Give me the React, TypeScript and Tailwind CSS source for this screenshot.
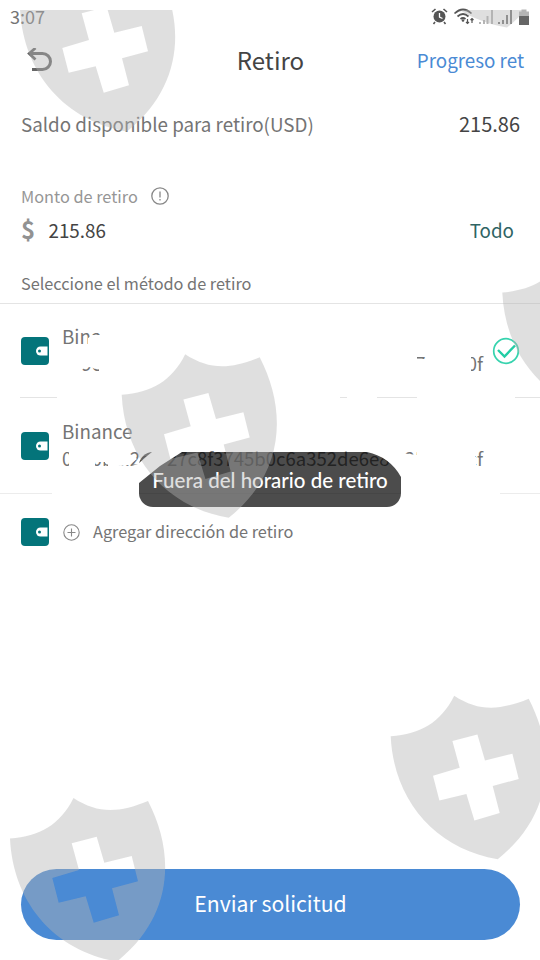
const SHIELDS = [
  { x: 20, y: -32 },
  { x: 400, y: -136 },
  { x: 502.3, y: 252 },
  { x: 121.7, y: 354.3 },
  { x: 390.7, y: 695.7 },
  { x: 10, y: 798 },
];

export default function App() {
  return (
    <div className="relative flex h-[960px] w-[540px] flex-col overflow-hidden bg-white font-['Noto_Sans_CJK_SC','Noto_Sans',sans-serif] text-[#747474]">
      <StatusBar />
      <header className="grid h-[54px] grid-cols-3 items-center px-4">
        <BackIcon />
        <h1 className="pb-0.5 pl-px text-center text-[24px] leading-none whitespace-nowrap text-[#444]">Retiro</h1>
        <span className="pb-0.5 text-right text-[18.8px] leading-none whitespace-nowrap text-[#4a8ad4]">Progreso ret</span>
      </header>

      <div className="flex h-[73px] items-center justify-between pr-5 pl-[21px] leading-none">
        <span className="text-[18.8px]">Saldo disponible para retiro(USD)</span>
        <span className="pb-0.5 text-[20px] text-[#444]">215.86</span>
      </div>

      <section className="flex h-[142px] shrink-0 flex-col px-[21px] pt-[22px]">
        <div className="flex h-[26px] items-center gap-[13px] text-[16.3px] leading-none text-[#969696]">
          <span>Monto de retiro</span>
          <InfoIcon />
        </div>
        <div className="flex h-[42px] items-center text-[18.8px] leading-none">
          <span className="w-[27.5px] pb-0.5 text-[24px] font-bold text-[#929292]">$</span>
          <span className="text-[#444]">215.86</span>
          <span className="mr-[5px] ml-auto text-[#2f6464]">Todo</span>
        </div>
        <p className="mt-[19px] flex h-[26px] items-center text-[16.3px] leading-none">Seleccione el método de retiro</p>
      </section>

      <div className="flex h-[190px] shrink-0 flex-col">
        <Wallet name="Binance" address={['0x9c36ab51', 'f0d72e8c4b1963a5e07d2c', '7a4e10f']} selected />
        <Wallet name="Binance" address={['0x90bu.2ea', '27c8f3745b0c6a352de6e8', '25a1b4cf']} />
      </div>

      <div className="flex h-[77px] items-center border-t border-[#ececec] pl-[21px]">
        <WalletIcon />
        <svg className="ml-3.5 size-[17px]" viewBox="0 0 17 17" fill="none" stroke="#888" strokeWidth="1.1">
          <circle cx="8.5" cy="8.5" r="7.7" />
          <path d="M8.5 4.5v8M4.5 8.5h8" />
        </svg>
        <span className="ml-[13px] pb-px text-[16.3px] leading-none">Agregar dirección de retiro</span>
      </div>

      <button className="mt-auto mr-5 mb-5 ml-[21px] h-[71px] shrink-0 rounded-full bg-[#4a8ad4] pb-1 text-[21.2px] text-white">
        Enviar solicitud
      </button>

      <div className="absolute top-[452px] left-[139px] flex h-[55px] w-[262px] items-center justify-center rounded-[14px] bg-black/70 pt-0.5 font-['Lato',sans-serif] text-[20.5px] leading-none font-medium whitespace-nowrap text-white">
        Fuera del horario de retiro
      </div>
      <Overlay />
    </div>
  );
}

function StatusBar() {
  return (
    <div className="flex h-[34px] shrink-0 items-center justify-between pr-2.5 pl-2.5">
      <span className="pb-[3px] text-[18px] leading-none">3:07</span>
      <svg className="h-[20px] w-[100px]" viewBox="430 6 100 20" fill="none" stroke="#555">
        <circle cx="439.5" cy="15.5" r="6" fill="#555" stroke="none" />
        <path d="M439.5 12v4l3 1.5" stroke="#fff" strokeWidth="1.3" />
        <path d="m432 11 3.5-3M443.500 8l3.500 3M435 21l-1.500 2M444 21l1.500 2" strokeWidth="1.6" />
        <path d="M454.500 12.500q8.500-8 17 0M457.500 15.500q5.500-5 11 0M460.500 18q2.500-2 5 0" strokeWidth="1.7" />
        <circle cx="463" cy="19.500" r="1.3" fill="#555" stroke="none" />
        <path d="M467.500 18v4.500m-1.500-1.500 1.500 1.500 1.500-1.500M472 22v-4.500m-1.500 1.500 1.500-1.500 1.500 1.500" strokeWidth="1.2" />
        <g strokeWidth="2">
          <path d="M480 23v-2M484 23v-4M487.500 23v-8M492 23V9" stroke="#b5b5b5" />
          <path d="M499 23v-2M503 23v-4M507 23v-9M511 23V9" stroke="#777" />
        </g>
        <path d="M519 10.500h2.500v-2h5v2h2.500v5h-10z" fill="#b5b5b5" stroke="none" />
        <path d="M519 15h10v9h-10z" fill="#666" stroke="none" />
      </svg>
    </div>
  );
}

function Wallet({ name, address, selected = false }: { name: string; address: string[]; selected?: boolean }) {
  const [head, middle, tail] = address;
  return (
    <div className="relative flex h-[94px] shrink-0 items-center border-t border-[#e4e4e4] pl-[21px] last:h-24">
      <WalletIcon />
      <div className="ml-[13px] flex flex-col pb-[3px] leading-none">
        <span className="flex h-7 items-center text-[18.8px]">{name}</span>
        <span className="flex h-[26px] w-[421px] items-center text-[18.5px]">
          <span className="w-[105px]">{head}</span>
          <span>{middle}</span>
          <span className="ml-auto">{tail}</span>
        </span>
      </div>
      {selected && (
        <svg className="absolute top-[33px] left-[492px] size-7" viewBox="0 0 28 28" fill="none">
          <circle cx="14" cy="14" r="12.300" stroke="#36d3ae" strokeWidth="1.700" />
          <path d="m6 13 6.500 6.500L23 8.500" stroke="#22cda5" strokeWidth="2.400" />
        </svg>
      )}
    </div>
  );
}

function WalletIcon() {
  return (
    <svg className="size-7 shrink-0" viewBox="0 0 28 28">
      <rect width="28" height="28" rx="4" fill="#04747a" />
      <path d="M26.500 9.500h-7a4.300 4.300 0 0 0 0 9h7z" fill="#fff" />
      <circle cx="18.500" cy="14" r="1.500" fill="#04747a" />
    </svg>
  );
}

function BackIcon() {
  return (
    <svg className="ml-2.5 h-[26px] w-[28px]" viewBox="26 48 28 26" fill="none" stroke="#666" strokeWidth="3">
      <path d="M30 53.500h12.500a8 8 0 0 1 0 16H32" />
      <path d="m35.500 48-6.300 5.500 6.300 6" strokeWidth="2.800" />
    </svg>
  );
}

function InfoIcon() {
  return (
    <svg className="size-[18px]" viewBox="0 0 18 18" fill="none" stroke="#888" strokeWidth="1.300">
      <circle cx="9" cy="9" r="8.200" />
      <path d="M9 4.500v6M9 12v1.500" />
    </svg>
  );
}

// Erased areas first, then the translucent shields on top of everything
function Overlay() {
  return (
    <svg className="pointer-events-none absolute inset-0 h-full w-full" viewBox="0 0 540 960">
      <defs>
        <clipPath id="below-edge">
          <rect y="10" width="540" height="950" />
        </clipPath>
      </defs>
      <g fill="#fff">
        <path d="M88 347v-9l5-3 7 0v-9h50v28H88z" />
        <path d="M60 352h357v27H99v-12l-4 2-4-2-9 1v11H60z" />
        <path d="M417 359h25v-8h33v5l-4 1v21h-54zM426 351h16v10h-16zM442 351h29v9h-29zM446 361h2v8h-2zM417 367h54v12h-54z" />
        <path d="M57 379h283v26H57zM347 379h30v26h-30zM417 379h98v26h-98zM0 390h20v15H0z" />
        <path d="M69 447h48v4l7-1 4 5h4l5 4-8 6-21 2v-4h-3v-1l-2 0h-8v8H69z" />
        <path d="M52 467h76l10-3 9-8 5-4h30l-22 14-21 17v17H52z" />
        <path d="M367 452q23 5 34 25v25h99v-32h-25v-23h-58v8l-16-2v-8z" />
        <path d="M401 457h75v45h-75z" />
      </g>
      <g clipPath="url(#below-edge)" fill="#b4b4b4" fillOpacity="0.425" fillRule="evenodd">
        {SHIELDS.map(({ x, y }) => (
          <path
            key={`${x}-${y}`}
            transform={`translate(${x} ${y})`}
            d="M0 40.500C30 38 50 27 63.500 0C88 16 109 15 138 3C165 55 164 118 107 163.500C45 153 3 105 0 40.500ZM61.700 45.300L86.700 38.700L94.300 64.700L121.700 58L128 83.300L102 90.300L109 117.300L83.700 124.700L75.700 98.300L48.700 104.700L42.300 80L69 72Z"
          />
        ))}
      </g>
    </svg>
  );
}
